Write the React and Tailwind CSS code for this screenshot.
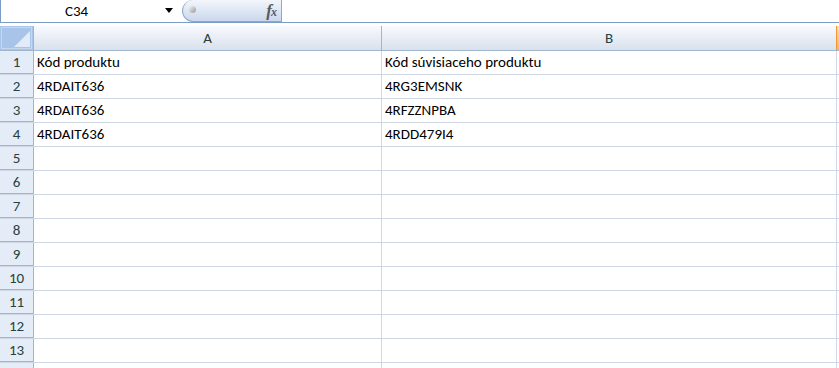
import React from "react";

const font = { fontFamily: "Carlito, 'Noto Sans', 'Open Sans', sans-serif" };

const rows = [
  ["Kód produktu", "Kód súvisiaceho produktu"],
  ["4RDAIT636", "4RG3EMSNK"],
  ["4RDAIT636", "4RFZZNPBA"],
  ["4RDAIT636", "4RDD479I4"],
  ["", ""],
  ["", ""],
  ["", ""],
  ["", ""],
  ["", ""],
  ["", ""],
  ["", ""],
  ["", ""],
  ["", ""],
  ["", ""],
];

export default function App() {
  return (
    <div className="w-[839px] h-[368px] overflow-hidden bg-white relative" style={font}>
      {/* Formula bar */}
      <div className="flex h-[23px] border-b border-[#7b9cc6] bg-white">
        <div className="w-[182px] h-full border-l border-[#7b9cc6] flex items-center relative">
          <span className="ml-[64px] text-[15px] text-black leading-none">C34</span>
          <svg className="absolute left-[164px] top-[8px]" width="8" height="5" viewBox="0 0 8 5">
            <polygon points="0,0 8,0 4,5" fill="#000" />
          </svg>
        </div>
        <div className="w-[100px] h-[22px] rounded-l-[11px] border border-t-0 border-[#8fa8c8] bg-gradient-to-b from-[#f3f6fb] to-[#c9d8ec] relative flex items-center justify-end pr-[5px]">
          <div className="absolute left-[6px] top-[6px] w-[7px] h-[7px] rounded-full bg-gradient-to-br from-[#f4f4f4] to-[#9a9a9a]" />
          <span className="italic font-bold text-[17px] text-[#5a5a5a] leading-none tracking-[-1px]" style={{ fontFamily: "'Liberation Serif', serif" }}>
            f<span className="text-[12px]">x</span>
          </span>
        </div>
        <div className="flex-1 h-full" />
      </div>
      <div className="h-[3px] bg-white" />
      {/* Column header */}
      <div className="flex h-[25px] border-b border-[#9eb6ce]">
        <div className="w-[34px] h-full border-r border-[#9eb6ce] bg-[#a9c4e9] relative">
          <div className="absolute inset-[1px] border border-[#c6d7ee]" />
          <svg className="absolute right-[3px] bottom-[3px]" width="16" height="16" viewBox="0 0 16 16">
            <polygon points="16,0 16,16 0,16" fill="#e2ecf8" />
          </svg>
        </div>
        <div className="w-[348px] h-full border-r border-[#9eb6ce] bg-gradient-to-b from-[#f8fafd] to-[#d9e1ec] flex items-center justify-center text-[15px] text-[#27413e]">
          A
        </div>
        <div className="w-[455px] h-full border-r-[1px] border-[#f29536] bg-gradient-to-b from-[#f8fafd] to-[#d9e1ec] flex items-center justify-center text-[15px] text-[#27413e]">
          B
        </div>
        <div className="flex-1 h-full bg-gradient-to-b from-[#fbe0a8] to-[#f5b65e]" />
      </div>
      {/* Rows */}
      {rows.map((r, i) => (
        <div key={i} className="flex h-[24px] border-b border-[#d0d7e5]">
          <div className="w-[34px] h-full border-r border-[#9eb6ce] bg-[#e4ecf7] flex items-center justify-center text-[15px] text-[#27413e] -mb-px border-b border-b-[#9eb6ce]">
            {i < 13 ? i + 1 : ""}
          </div>
          <div className="w-[348px] h-full border-r border-[#d0d7e5] flex items-center pl-[3px] text-[15px] text-black">
            {r[0]}
          </div>
          <div className="w-[455px] h-full border-r border-[#d0d7e5] flex items-center pl-[3px] text-[15px] text-black">
            {r[1]}
          </div>
          <div className="flex-1 h-full" />
        </div>
      ))}
    </div>
  );
}
